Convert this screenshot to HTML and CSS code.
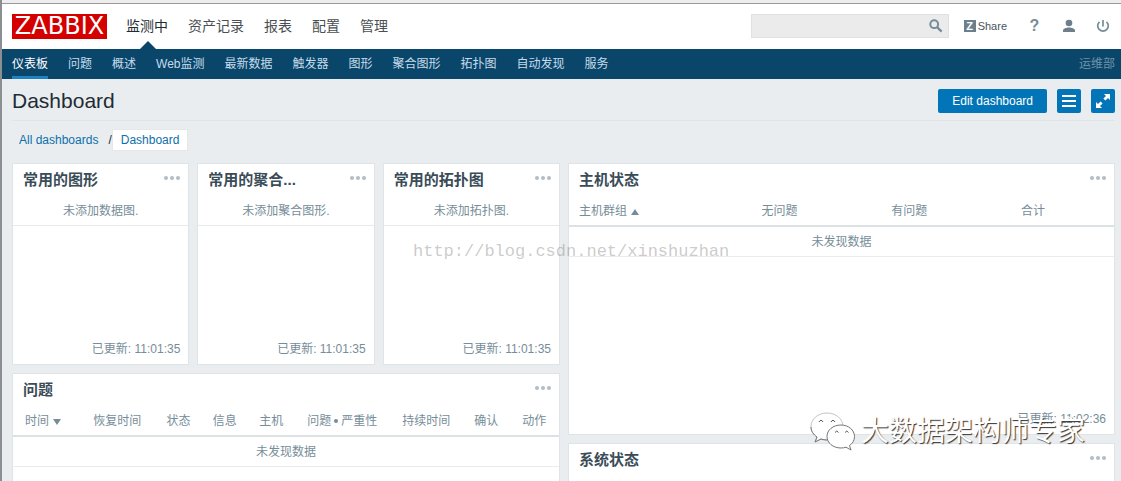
FILE: index.html
```html
<!DOCTYPE html>
<html lang="zh-CN">
<head>
<meta charset="utf-8">
<title>Dashboard</title>
<link rel="stylesheet" href="styles.css">
</head>
<body>
<div class="page">
  <header class="top">
    <a class="logo" href="#">ZABBIX</a>
    <nav class="main-nav">
      <a class="selected" href="#">监测中</a>
      <a href="#">资产记录</a>
      <a href="#">报表</a>
      <a href="#">配置</a>
      <a href="#">管理</a>
    </nav>
    <form class="search">
      <input type="text" aria-label="搜索">
      <button type="button" aria-label="搜索">
        <svg width="14" height="14" viewBox="0 0 14 14"><circle cx="5.2" cy="5.2" r="3.9" fill="none" stroke="#768d99" stroke-width="2"/><path d="M8 8l4.6 4.6" stroke="#768d99" stroke-width="2.4"/></svg>
      </button>
    </form>
    <div class="user-nav">
      <a class="share" href="#"><span class="z">Z</span>Share</a>
      <a class="help" href="#" aria-label="帮助">?</a>
      <a href="#" aria-label="用户"><svg width="14" height="14" viewBox="0 0 14 14" fill="#6c7f8a"><circle cx="7" cy="4" r="3.3"/><path d="M1 13v-1.6C1 9.6 4.4 8.500 7 8.500s6 1.100 6 2.900V13z"/></svg></a>
      <a href="#" aria-label="退出"><svg width="14" height="14" viewBox="0 0 14 14" fill="none" stroke="#768d99" stroke-width="1.700"><path d="M7 1v6.500M3.500 2.800a5.300 5.300 0 1 0 7 0"/></svg></a>
    </div>
  </header>
  <nav class="sub-nav">
    <a class="selected" href="#">仪表板</a>
    <a href="#">问题</a>
    <a href="#">概述</a>
    <a href="#">Web监测</a>
    <a href="#">最新数据</a>
    <a href="#">触发器</a>
    <a href="#">图形</a>
    <a href="#">聚合图形</a>
    <a href="#">拓扑图</a>
    <a href="#">自动发现</a>
    <a href="#">服务</a>
    <span class="server">运维部</span>
  </nav>
  <main>
    <div class="title-row">
      <h1>Dashboard</h1>
      <button class="btn" type="button">Edit dashboard</button>
      <button class="btn icon" type="button" aria-label="菜单"><svg width="14" height="12" viewBox="0 0 14 12" fill="#fff"><path d="M0 0h14v2H0zM0 5h14v2H0zM0 10h14v2H0z"/></svg></button>
      <button class="btn icon" type="button" aria-label="全屏"><svg width="14" height="14" viewBox="0 0 14 14" fill="#fff"><path d="M8 0h6v6l-2-2-2.600 2.600-2-2L10 2zM6 14H0V8l2 2 2.600-2.600 2 2L4 12z"/></svg></button>
    </div>
    <div class="crumbs">
      <a href="#">All dashboards</a><span class="slash">/</span><a class="current" href="#">Dashboard</a>
    </div>
    <div class="board">
      <div class="left">
        <section class="card small">
          <div class="head"><h2>常用的图形</h2><button class="dots" type="button" aria-label="操作"><i></i><i></i><i></i></button></div>
          <p class="empty">未添加数据图.</p>
          <p class="updated">已更新: 11:01:35</p>
        </section>
        <section class="card small">
          <div class="head"><h2>常用的聚合...</h2><button class="dots" type="button" aria-label="操作"><i></i><i></i><i></i></button></div>
          <p class="empty">未添加聚合图形.</p>
          <p class="updated">已更新: 11:01:35</p>
        </section>
        <section class="card small">
          <div class="head"><h2>常用的拓扑图</h2><button class="dots" type="button" aria-label="操作"><i></i><i></i><i></i></button></div>
          <p class="empty">未添加拓扑图.</p>
          <p class="updated">已更新: 11:01:35</p>
        </section>
        <section class="card problems">
          <div class="head"><h2>问题</h2><button class="dots" type="button" aria-label="操作"><i></i><i></i><i></i></button></div>
          <table>
            <colgroup><col class="c-time"><col class="c-recovery"><col class="c-short"><col class="c-short"><col class="c-host"><col class="c-problem"><col class="c-duration"><col class="c-host"><col></colgroup>
            <thead><tr><th>时间<span class="sort down"></span></th><th>恢复时间</th><th>状态</th><th>信息</th><th>主机</th><th>问题<span class="bullet"></span>严重性</th><th>持续时间</th><th>确认</th><th>动作</th></tr></thead>
            <tbody><tr><td colspan="9">未发现数据</td></tr></tbody>
          </table>
        </section>
      </div>
      <div class="right">
        <section class="card hosts">
          <div class="head"><h2>主机状态</h2><button class="dots" type="button" aria-label="操作"><i></i><i></i><i></i></button></div>
          <table>
            <colgroup><col class="c-group"><col class="c-count"><col class="c-count"><col></colgroup>
            <thead><tr><th>主机群组<span class="sort up"></span></th><th>无问题</th><th>有问题</th><th>合计</th></tr></thead>
            <tbody><tr><td colspan="4">未发现数据</td></tr></tbody>
          </table>
          <p class="updated">已更新: 11:02:36</p>
        </section>
        <section class="card system">
          <div class="head"><h2>系统状态</h2><button class="dots" type="button" aria-label="操作"><i></i><i></i><i></i></button></div>
        </section>
      </div>
    </div>
  </main>
  <div class="mark-url">http://blog.csdn.net/xinshuzhan</div>
  <div class="mark-brand">
    <svg width="46" height="40" viewBox="0 0 46 40" fill="#fff" stroke-width="1"><path d="M17 1C8 1 1 7 1 14.500c0 4.500 2.500 8 6 10.500l-2 5 6-3c2 .7 4 1 6 1 9 0 16-6 16-13.500S26 1 17 1z" stroke="#c4c4c4"/><path d="M1 15c0 4.500 2.500 7.500 6 10l-2 5 6-3c2 .7 4 1 6 1" fill="none" stroke="#777"/><path d="M31 13c-8 0-14 5-14 11.500S23 36 31 36c2 0 3.500-.3 5-.8l5 2.800-1.500-4.500c3-2 5-5 5-9C44.500 18 38.500 13 31 13z" stroke="#777"/><path d="M9 10q2-3.500 4 0M21 10q2-3.500 4 0M25 20.500q1.800-3 3.500 0M35 20.500q1.800-3 3.500 0" fill="none" stroke="#555"/></svg>
    <span>大数据架构师专家</span>
  </div>
</div>
</body>
</html>
```
FILE: styles.css
```css
* { box-sizing: border-box; }
body {
  margin: 0;
  font: 12px/14px "Liberation Sans", "Noto Sans CJK SC", sans-serif;
  color: #768d99;
}
a { color: inherit; text-decoration: none; }
button { font: inherit; border: 0; padding: 0; background: none; cursor: pointer; }
h1, h2, p { margin: 0; font-weight: normal; }
svg { display: block; }

.page {
  position: relative;
  height: 100vh;
  overflow: hidden;
  background: #e9edf0;
  border-left: 2px solid #8c8f92;
}

.top {
  display: flex;
  align-items: center;
  height: 49px;
  padding: 0 11px 0 10px;
  background: #fff;
  border-top: 3px solid #ededed;
  box-shadow: inset 0 1px #999;
}
.logo {
  width: 95px;
  height: 25px;
  background: #d40000;
  color: #fff;
  font-family: "DejaVu Sans", sans-serif;
  font-size: 24px;
  line-height: 25px;
  text-align: center;
}
.main-nav {
  display: flex;
  gap: 20px;
  height: 100%;
  margin-left: 19px;
  font-size: 14px;
  line-height: 47px;
  color: #4a4f53;
}
.main-nav .selected { position: relative; color: #1f2c33; }
.main-nav .selected::after {
  content: "";
  position: absolute;
  left: 50%;
  bottom: 0;
  margin-left: -7px;
  border: 8px solid transparent;
  border-top: 0;
  border-bottom-color: #0a466a;
}
.search {
  display: flex;
  align-items: center;
  width: 198px;
  height: 24px;
  margin-left: auto;
  padding-right: 5px;
  background: #ebebeb;
  border: 1px solid #e0e0e0;
}
.search input { flex: 1; min-width: 0; height: 100%; border: 0; background: none; }
.user-nav { display: flex; align-items: center; gap: 20px; margin-left: 15px; }
.share { display: flex; align-items: center; gap: 2px; font-size: 11px; color: #4a545b; }
.z {
  width: 12px;
  height: 12px;
  background: #6c7f8a;
  color: #fff;
  font-weight: bold;
  line-height: 12px;
  text-align: center;
}
.help { width: 15px; font-size: 16px; font-weight: bold; text-align: center; }

.sub-nav {
  display: flex;
  gap: 20px;
  height: 30px;
  padding: 0 6px 0 10px;
  background: #0a466a;
  color: #c5dcea;
  line-height: 30px;
}
.sub-nav .selected { color: #fff; border-bottom: 3px solid #1f82c0; }
.server { margin-left: auto; color: #6f93a9; }

main { padding: 0 6px 0 10px; }
.title-row {
  display: flex;
  align-items: center;
  gap: 10px;
  height: 42px;
  padding-top: 3px;
  border-bottom: 1px solid #dfe4e7;
}
h1 { flex: 1; font-size: 21px; line-height: 24px; color: #1f2c33; }
.btn {
  height: 24px;
  padding: 0 14px;
  border-radius: 2px;
  background: #0275b8;
  color: #fff;
}
.btn.icon { display: flex; align-items: center; justify-content: center; width: 24px; padding: 0; }
.crumbs { display: flex; align-items: center; height: 42px; padding: 0 0 4px 7px; color: #0e6fab; }
.slash { margin-left: 10px; color: #1f2c33; }
.current { padding: 3px 8px; background: #fff; border: 1px solid #e4e8eb; }

.board { display: grid; grid-template-columns: 548fr 547fr; gap: 8px; }
.left { display: grid; grid-template-columns: repeat(3, 1fr); gap: 8px; }
.right { display: flex; flex-direction: column; gap: 8px; }
.card { display: flex; flex-direction: column; background: #fff; border: 1px solid #dfe4e7; }
.small { min-height: 202px; }
.hosts { min-height: 272px; }
.problems { grid-column: 1 / -1; min-height: 200px; }
.system { min-height: 130px; }
.head { display: flex; justify-content: space-between; height: 32px; padding: 0 8px 0 10px; }
h2 { font-size: 15px; font-weight: bold; line-height: 32px; color: #3a4c57; white-space: nowrap; }
.dots { display: flex; align-items: center; gap: 2px; height: 28px; }
.dots i { width: 4px; height: 4px; border-radius: 2px; background: #b4bdc3; }
.empty { height: 30px; line-height: 30px; text-align: center; border-bottom: 1px solid #e6eaed; }
.updated { margin-top: auto; padding: 0 8px 8px; text-align: right; }

table { width: 100%; table-layout: fixed; border-collapse: separate; border-spacing: 0; }
th, td { height: 30px; padding: 0; font-weight: normal; white-space: nowrap; }
th { height: 31px; padding-left: 12px; text-align: left; border-bottom: 2px solid #dce1e4; }
.hosts th { padding-left: 10px; }
td { text-align: center; border-bottom: 1px solid #e9edf0; }
.c-time { width: 12.5%; }
.c-recovery { width: 13.4%; }
.c-short { width: 8.5%; }
.c-host { width: 8.8%; }
.c-problem { width: 17.4%; }
.c-duration { width: 13.2%; }
.c-group { width: 33.5%; }
.c-count { width: 23.8%; }
.sort { display: inline-block; margin-left: 4px; border: 4px solid transparent; }
.sort.down { border-top: 6px solid #768d99; border-bottom: 0; }
.sort.up { border-bottom: 6px solid #768d99; border-top: 0; }
.bullet {
  display: inline-block;
  width: 4px;
  height: 4px;
  margin: 0 3px;
  border-radius: 2px;
  background: #768d99;
  vertical-align: middle;
}

.mark-url {
  position: absolute;
  left: 411px;
  top: 242px;
  font: 17px/20px "Liberation Mono", monospace;
  color: rgba(130, 130, 130, .42);
}
.mark-brand {
  position: absolute;
  right: 36px;
  top: 412px;
  display: flex;
  align-items: center;
  gap: 5px;
  font-size: 28px;
  line-height: 40px;
  color: #fff;
  text-shadow: 1px 1px 1px #333;
  white-space: nowrap;
}
```
